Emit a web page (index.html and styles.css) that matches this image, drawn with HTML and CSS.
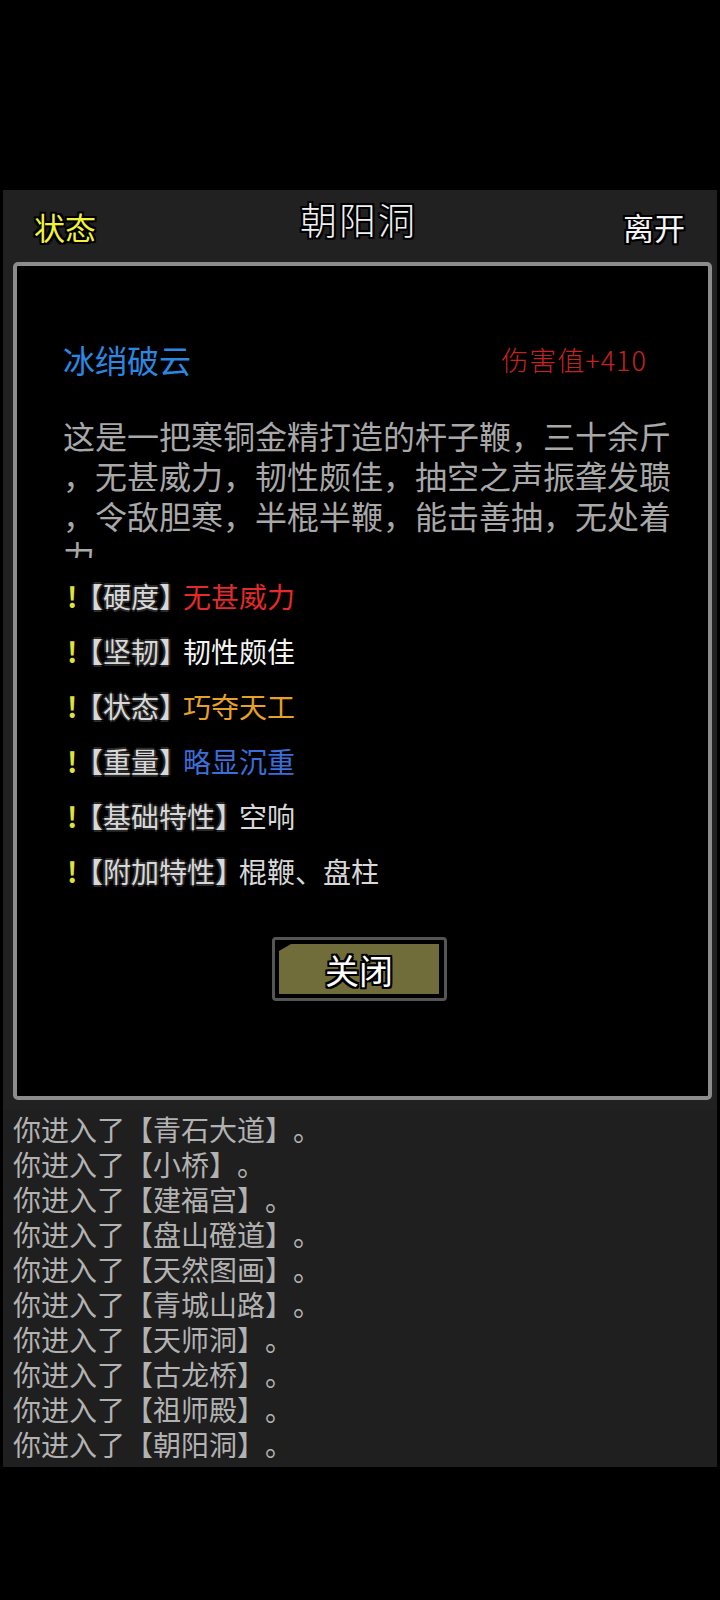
FILE: index.html
```html
<!DOCTYPE html>
<html lang="zh-CN">
<head>
    <meta charset="UTF-8">
    <meta name="viewport" content="width=device-width, initial-scale=1.0">
    <title>朝阳洞</title>
    <link rel="stylesheet" href="styles.css">
</head>
<body>
<div class="screen">
    <!-- 场景面板 -->
    <div class="stage">
        <div class="top-bar">
            <span class="top-btn status">状态</span>
            <span class="place">朝阳洞</span>
            <span class="top-btn leave">离开</span>
        </div>

        <!-- 物品详情弹窗 -->
        <div class="dialog">
            <div class="item-head">
                <span class="item-name">冰绡破云</span>
                <span class="item-dmg">伤害值+410</span>
            </div>
            <div class="item-desc">这是一把寒铜金精打造的杆子鞭，三十余斤，无甚威力，韧性颇佳，抽空之声振聋发聩，令敌胆寒，半棍半鞭，能击善抽，无处着力</div>
            <ul class="attrs">
                <li><span class="mark">!</span><span class="label">【硬度】</span><span class="val red">无甚威力</span></li>
                <li><span class="mark">!</span><span class="label">【坚韧】</span><span class="val white">韧性颇佳</span></li>
                <li><span class="mark">!</span><span class="label">【状态】</span><span class="val orange">巧夺天工</span></li>
                <li><span class="mark">!</span><span class="label">【重量】</span><span class="val blue">略显沉重</span></li>
                <li><span class="mark">!</span><span class="label">【基础特性】</span><span class="val">空响</span></li>
                <li><span class="mark">!</span><span class="label">【附加特性】</span><span class="val">棍鞭、盘柱</span></li>
            </ul>
            <div class="actions">
                <button type="button" class="close-btn"><span class="close-face">关闭</span></button>
            </div>
        </div>
    </div>

    <!-- 消息记录 -->
    <div class="log">
        <p>你进入了【青石大道】。</p>
        <p>你进入了【小桥】。</p>
        <p>你进入了【建福宫】。</p>
        <p>你进入了【盘山磴道】。</p>
        <p>你进入了【天然图画】。</p>
        <p>你进入了【青城山路】。</p>
        <p>你进入了【天师洞】。</p>
        <p>你进入了【古龙桥】。</p>
        <p>你进入了【祖师殿】。</p>
        <p>你进入了【朝阳洞】。</p>
    </div>
</div>
</body>
</html>
```

FILE: styles.css
```css
/* 全局 */
body {
    margin: 0;
    background-color: #000;
    font-family: "Noto Sans CJK SC", "Noto Sans", sans-serif;
    text-spacing-trim: space-all;
}

.screen {
    width: 720px;
    height: 1600px;
    padding-top: 190px;
    box-sizing: border-box;
}

/* 场景面板 */
.stage {
    margin: 0 3px;
    height: 920px;
    padding: 0 5px 0 10px;
    background-color: #212121;
}

.top-bar {
    height: 72px;
    display: grid;
    grid-template-columns: 1fr auto 1fr;
    align-items: center;
    padding: 0 27px 0 21px;
}

.top-btn {
    font-size: 31px;
    line-height: 1;
    text-shadow: -2px 0 #000, 2px 0 #000, 0 -2px #000, 0 2px #000,
                 -2px -2px #000, 2px 2px #000, -2px 2px #000, 2px -2px #000;
}

.status {
    color: #f2f23a;
    justify-self: start;
}

.leave {
    color: #f4f4f4;
    justify-self: end;
}

.place {
    font-size: 37px;
    font-weight: 300;
    line-height: 1;
    letter-spacing: 2px;
    color: #f0f0f0;
    margin: 0 0 14px -2px;
    text-shadow: -2px 0 #000, 2px 0 #000, 0 -2px #000, 0 2px #000,
                 -2px -2px #000, 2px 2px #000, -2px 2px #000, 2px -2px #000;
}

/* 弹窗 */
.dialog {
    height: 838px;
    box-sizing: border-box;
    border: 4px solid #8c8c8c;
    border-radius: 5px;
    background-color: #000;
    padding: 73px 35px 0 46px;
}

.item-head {
    display: flex;
    justify-content: space-between;
    align-items: center;
    height: 40px;
}

.item-name {
    font-size: 32px;
    color: #2b88e2;
}

.item-dmg {
    font-size: 27px;
    font-weight: 300;
    letter-spacing: 1px;
    color: #c42323;
    margin-right: 26px;
}

.item-desc {
    margin-top: 36px;
    height: 143px;
    overflow: hidden;
    font-size: 32px;
    line-height: 40px;
    color: #a8a8a8;
    word-break: break-all;
    line-break: anywhere;
}

/* 属性列表 */
.attrs {
    list-style: none;
    margin: 10px 0 0;
    padding: 0;
}

.attrs li {
    display: flex;
    align-items: center;
    height: 55px;
    font-size: 28px;
}

.mark {
    color: #e2e23c;
    font-weight: bold;
    width: 8px;
    margin-left: 4px;
}

.label {
    color: #d8d8d8;
    text-shadow: -2px 0 #2a2a2a, 2px 0 #2a2a2a, 0 -2px #2a2a2a, 0 2px #2a2a2a;
}

.val {
    margin-left: -4px;
    color: #d8d8d8;
}

.red {
    color: #e42a2a;
}

.white {
    color: #f4f4f4;
}

.orange {
    color: #e6a224;
}

.blue {
    color: #3a6ed8;
}

/* 关闭按钮 */
.actions {
    margin-top: 39px;
    padding-left: 209px;
}

.close-btn {
    width: 175px;
    height: 64px;
    padding: 4px 5px 4px 4px;
    border: 3px solid #555;
    border-radius: 4px;
    background-color: #000;
    cursor: pointer;
}

.close-face {
    display: flex;
    justify-content: center;
    align-items: center;
    height: 100%;
    background-color: #706d3b;
    clip-path: polygon(0 7px, 12px 0, 100% 0, 100% 100%, 0 100%);
    font-family: "Noto Sans CJK SC", sans-serif;
    font-size: 34px;
    color: #fff;
    text-shadow: -2px 0 #000, 2px 0 #000, 0 -2px #000, 0 2px #000,
                 -2px -2px #000, 2px 2px #000, -2px 2px #000, 2px -2px #000;
}

/* 消息记录 */
.log {
    margin: 0 3px;
    height: 357px;
    box-sizing: border-box;
    padding: 2px 0 0 10px;
    background-color: #1f1f1f;
}

.log p {
    margin: 0;
    font-size: 28px;
    line-height: 35px;
    color: #b2b2b2;
}
```
